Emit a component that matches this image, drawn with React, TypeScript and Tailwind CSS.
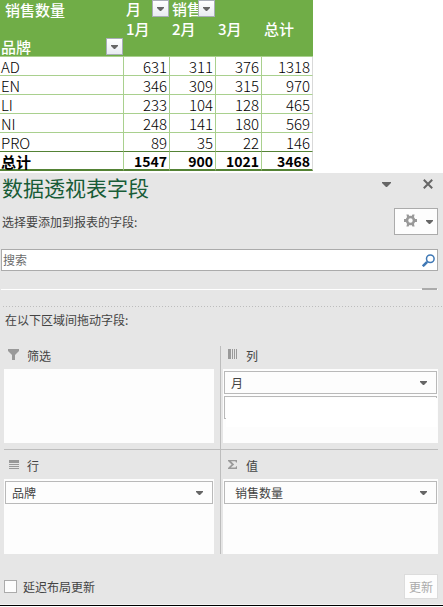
import React from "react";

const months = ["1月", "2月", "3月", "总计"];

const rows: { brand: string; values: number[] }[] = [
  { brand: "AD", values: [631, 311, 376, 1318] },
  { brand: "EN", values: [346, 309, 315, 970] },
  { brand: "LI", values: [233, 104, 128, 465] },
  { brand: "NI", values: [248, 141, 180, 569] },
  { brand: "PRO", values: [89, 35, 22, 146] },
];

const totals = [1547, 900, 1021, 3468];

function SmallCaret() {
  return (
    <svg viewBox="0 0 7 4" className="h-1 w-[7px] shrink-0 text-[#666666]" aria-hidden="true">
      <path d="M0 0h7v1L4 4H3L0 1z" fill="currentColor" />
    </svg>
  );
}

function FilterButton({ label }: { label: string }) {
  return (
    <button
      type="button"
      aria-label={label}
      className="absolute right-px top-0 flex h-[17px] w-[17px] items-center justify-center border border-[#a9adb8] bg-gradient-to-b from-white to-[#e9ecf2]"
    >
      <SmallCaret />
    </button>
  );
}

function PivotTable() {
  return (
    <table className="w-[313px] table-fixed border-separate border-spacing-0 text-[15px] leading-[18px] text-black">
      <colgroup>
        <col className="w-[124px]" />
        <col className="w-[46px]" />
        <col className="w-[46px]" />
        <col className="w-[46px]" />
        <col />
      </colgroup>
      <thead className="bg-[#70ad47] text-left font-medium text-white">
        <tr className="h-[19px]">
          <th className="p-0 pl-[5px] font-medium">销售数量</th>
          <th className="p-0 font-medium">
            <div className="relative h-[19px] pl-0.5">
              月
              <FilterButton label="筛选月" />
            </div>
          </th>
          <th className="p-0 font-medium">
            <div className="relative h-[19px] whitespace-nowrap pl-0.5">
              销售
              <FilterButton label="筛选销售" />
            </div>
          </th>
          <th className="p-0" colSpan={2} />
        </tr>
        <tr className="h-[19px]">
          <th className="p-0" />
          {months.map((m) => (
            <th key={m} className="p-0 pl-0.5 font-medium">
              {m}
            </th>
          ))}
        </tr>
        <tr className="h-[19px]">
          <th className="border-b border-[#a9d08e] p-0 font-medium">
            <div className="relative h-[18px] pl-px">
              品牌
              <FilterButton label="筛选品牌" />
            </div>
          </th>
          <th className="border-b border-[#a9d08e] p-0" colSpan={4} />
        </tr>
      </thead>
      <tbody>
        {rows.map((r, i) => {
          const line = i === rows.length - 1 ? "border-b-[#548235]" : "border-b-[#a9d08e]";
          return (
            <tr key={r.brand} className="h-[19px]">
              <th scope="row" className={`border-b border-r border-r-[#a9d08e] p-0 pl-px pt-px text-left font-light leading-[17px] ${line}`}>
                {r.brand}
              </th>
              {r.values.map((v, j) => (
                <td key={j} className={`border-b border-r border-r-[#a9d08e] p-0 pr-0.5 pt-px text-right font-light leading-[17px] last:border-r-[#d9d9d9] ${line}`}>
                  {v}
                </td>
              ))}
            </tr>
          );
        })}
      </tbody>
      <tfoot className="font-bold">
        <tr className="h-[19px]">
          <th scope="row" className="border-b-2 border-r border-b-[#548235] border-r-[#a9d08e] p-0 pl-px pt-0.5 text-left leading-[15px]">
            总计
          </th>
          {totals.map((v) => (
            <td key={v} className="border-b-2 border-r border-b-[#548235] border-r-[#a9d08e] p-0 pr-0.5 pt-0.5 text-right text-[14px] leading-[15px] last:border-r-[#d9d9d9]">
              {v}
            </td>
          ))}
        </tr>
      </tfoot>
    </table>
  );
}

function FieldButton({ label, inset = "pl-1.5" }: { label: string; inset?: string }) {
  return (
    <button
      type="button"
      className={`flex h-[23px] w-full items-center justify-between border border-[#b9b9b9] bg-[#fdfdfd] pr-[9px] text-left ${inset}`}
    >
      {label}
      <SmallCaret />
    </button>
  );
}

function Area({
  icon,
  title,
  className,
  children,
}: {
  icon: React.ReactNode;
  title: string;
  className: string;
  children?: React.ReactNode;
}) {
  return (
    <section className={`flex h-[104px] flex-col border-[#bdbdbd] ${className}`}>
      <h3 className="mb-1 flex h-[18px] shrink-0 items-center gap-2 pl-1">
        <span className="mb-1 flex w-[11px] justify-center text-[#999999]">{icon}</span>
        {title}
      </h3>
      <div className="flex flex-1 flex-col gap-0.5 bg-[#fdfdfd] px-px pt-0.5">{children}</div>
    </section>
  );
}

function FieldPane() {
  return (
    <aside className="border-b border-[#f4f4f4] bg-[#e6e6e6] text-[12px] leading-[18px] text-[#444444]">
      <header className="flex h-[30px] items-center justify-between pl-0.5 pr-2.5">
        <h2 className="mb-0.5 text-[21px] leading-[28px] text-[#185c37]">数据透视表字段</h2>
        <div className="mb-2 flex items-center gap-8">
          <button type="button" aria-label="任务窗格选项">
            <svg viewBox="0 0 9 5" className="h-[5px] w-[9px] text-[#666666]" aria-hidden="true">
              <path d="M0 0h9v1L5 5H4L0 1z" fill="currentColor" />
            </svg>
          </button>
          <button type="button" aria-label="关闭">
            <svg viewBox="0 0 10 10" className="h-2.5 w-2.5 text-[#666666]" aria-hidden="true">
              <path d="M0.8 0.8l8.4 8.4M9.2 0.8L0.8 9.2" stroke="currentColor" strokeWidth="2" fill="none" />
            </svg>
          </button>
        </div>
      </header>

      <div className="mt-[5px] flex h-[27px] items-center justify-between pl-0.5 pr-[5px]">
        <p>选择要添加到报表的字段:</p>
        <button
          type="button"
          aria-label="工具"
          className="flex h-[27px] w-11 items-center justify-between border border-[#ababab] bg-[#fdfdfd] pl-[9px] pr-1"
        >
          <svg viewBox="0 0 13 13" className="mb-0.5 h-[13px] w-[13px] text-[#999999]" aria-hidden="true">
            <circle cx="6.5" cy="6.5" r="3.5" fill="none" stroke="currentColor" strokeWidth="2.6" />
            <path
              d="M2.4 0.6h2.2l1 2.2-2.4 1zM10.6 0.6H8.4l-1 2.2 2.4 1zM2.4 12.4h2.2l1-2.2-2.4-1zM10.6 12.4H8.4l-1-2.2 2.4-1zM0 5h2.6v3H0zM10.4 5H13v3h-2.6z"
              fill="currentColor"
            />
          </svg>
          <SmallCaret />
        </button>
      </div>

      <div className="ml-px mr-[5px] mt-3.5 flex h-[22px] items-center border border-[#ababab] bg-white pr-0.5">
        <input
          type="text"
          aria-label="搜索"
          placeholder="搜索"
          className="h-[18px] min-w-0 flex-1 bg-transparent pl-px text-[12px] outline-none placeholder:text-[#6b6b6b]"
        />
        <button type="button" aria-label="开始搜索">
          <svg viewBox="0 0 13 13" className="h-[13px] w-[13px] text-[#3f78b5]" aria-hidden="true">
            <circle cx="8.3" cy="4.7" r="3.8" fill="none" stroke="currentColor" strokeWidth="1.5" />
            <path d="M5.2 7.8L0.8 12.2" stroke="currentColor" strokeWidth="2.6" fill="none" />
          </svg>
        </button>
      </div>

      <div className="ml-px mr-[5px] mt-[17px] flex h-0.5 items-end">
        <div className="h-px flex-1 bg-white" />
        <div className="h-0.5 w-[15px] bg-[#ababab]" />
        <div className="h-px w-px bg-white" />
      </div>

      <div className="ml-[3px] mt-4 h-px bg-[repeating-linear-gradient(90deg,#bdbdbd_0_1px,#e6e6e6_1px_3px)]" />

      <p className="ml-[5px] mt-1">在以下区域间拖动字段:</p>

      <div className="ml-1 mr-[5px] mt-[17px] grid grid-cols-2">
        <Area
          title="筛选"
          className="border-b border-r pb-1.5 pr-1.5 pt-px"
          icon={
            <svg viewBox="0 0 11 11" className="h-[11px] w-[11px]" aria-hidden="true">
              <path d="M0 0h11v2L7 6v5H4V6L0 2z" fill="currentColor" />
            </svg>
          }
        />
        <Area
          title="列"
          className="border-b pb-1.5 pl-0.5 pt-px"
          icon={
            <svg viewBox="0 0 9 10" className="h-2.5 w-[9px]" shapeRendering="crispEdges" aria-hidden="true">
              <path d="M0 0h3v10H0zM4 0h1v10H4zM6 0h1v10H6zM8 0h1v10H8z" fill="currentColor" />
            </svg>
          }
        >
          <FieldButton label="月" />
          <div className="relative h-[23px] border border-[#b9b9b9]">
            <div className="absolute -bottom-[9px] -right-px left-px top-px bg-white" />
          </div>
        </Area>
        <Area
          title="行"
          className="border-r pr-1.5 pt-[7px]"
          icon={
            <svg viewBox="0 0 10 9" className="h-[9px] w-2.5" shapeRendering="crispEdges" aria-hidden="true">
              <path d="M0 0h10v3H0zM0 4h10v1H0zM0 6h10v1H0zM0 8h10v1H0z" fill="currentColor" />
            </svg>
          }
        >
          <FieldButton label="品牌" />
        </Area>
        <Area
          title="值"
          className="pl-0.5 pt-[7px]"
          icon={
            <svg viewBox="0 0 9 9" className="h-[9px] w-[9px]" aria-hidden="true">
              <path d="M0 0h9v2.6H8L7.4 1.2H3L6.2 4.4L2.8 7.6h4.8L8.2 6.2H9V9H0V8L3.6 4.5L0 1z" fill="currentColor" />
            </svg>
          }
        >
          <FieldButton label="销售数量" inset="pl-2.5" />
        </Area>
      </div>

      <footer className="flex items-center justify-between pb-[5px] pl-1 pr-[5px] pt-5">
        <label className="flex items-center gap-1.5">
          <input type="checkbox" className="h-[13px] w-[13px] appearance-none border border-[#ababab] bg-[#fdfdfd] checked:bg-[#217346]" />
          延迟布局更新
        </label>
        <button type="button" disabled className="h-[25px] w-[34px] border border-[#dcdcdc] bg-[#fdfdfd] text-[#ababab]">
          更新
        </button>
      </footer>
    </aside>
  );
}

export default function App() {
  return (
    <main className="flex flex-col gap-0.5 border-b border-black bg-white font-['Noto_Sans_CJK_SC','Microsoft_YaHei',sans-serif]">
      <PivotTable />
      <FieldPane />
    </main>
  );
}
